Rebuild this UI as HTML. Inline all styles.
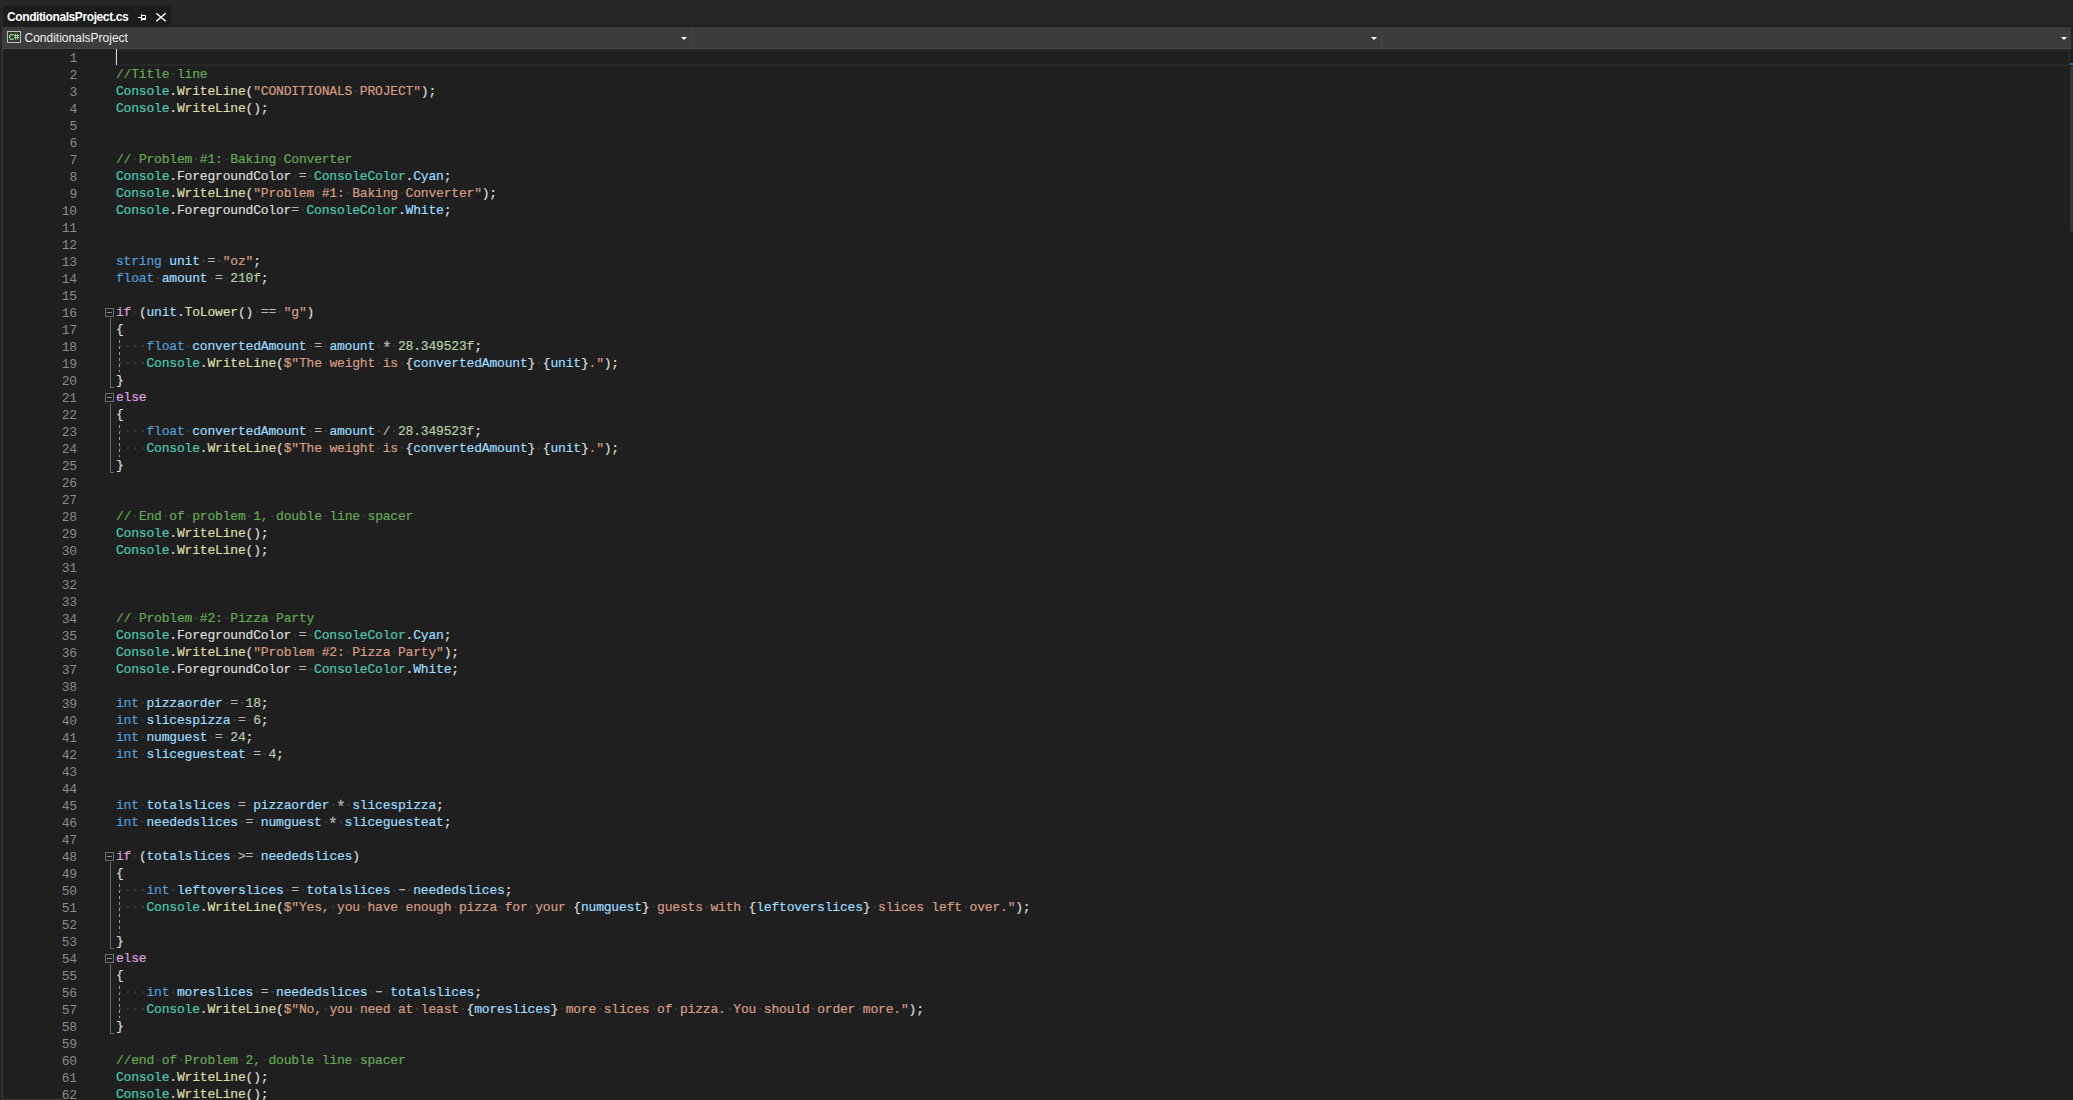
<!DOCTYPE html><html><head><meta charset="utf-8"><style>
*{margin:0;padding:0;box-sizing:border-box}
html,body{width:2073px;height:1100px;overflow:hidden;background:#262626}
body{position:relative;font-family:"Liberation Sans",sans-serif}
.tab{position:absolute;left:3px;top:6px;width:168px;height:19px;background:#1c1c1c}
.tabline{position:absolute;left:3px;top:25px;width:2073px;height:2px;background:#1e1e1e}
.tabtext{position:absolute;left:7px;top:10px;font:bold 12px "Liberation Sans",sans-serif;color:#fff;white-space:nowrap;letter-spacing:-0.4px}
.nav{position:absolute;left:2px;top:27px;width:2069px;height:21px;background:#3c3c3c}
.navline{position:absolute;left:2px;top:48px;width:2069px;height:1px;background:#484848}
.navtext{position:absolute;left:24.5px;top:31px;font:12px "Liberation Sans",sans-serif;color:#f0f0f0;white-space:nowrap}
.div{position:absolute;top:27px;width:3px;height:21px;background:#404040}
.arrow{position:absolute;width:0;height:0;border-left:3px solid transparent;border-right:3px solid transparent;border-top:3px solid #fff}
.editor{position:absolute;left:2px;top:49px;width:2068px;height:1051px;background:#1f1f1f;border-left:1px solid #3a3a3a}
.curline{position:absolute;left:114px;top:49px;width:1956px;height:17px;border:2px solid #282828}
.caret{position:absolute;left:116px;top:49px;width:1px;height:16px;background:#dcdcdc}
.ln{position:absolute;left:40px;width:37px;height:17px;text-align:right;font:13px "Liberation Mono",monospace;letter-spacing:-0.183px;line-height:17px;padding-top:1px;color:#8a8a8a}
.cl{position:absolute;left:116px;height:17px;white-space:pre;font:13px "Liberation Mono",monospace;letter-spacing:-0.183px;line-height:17px;padding-top:0px;color:#dcdcdc}
.cl b{font-weight:normal;-webkit-text-stroke:0.2px currentColor}
.cl i{font-style:normal;color:#3f3f3f}
.gs,.gm,.ge{display:inline-block}.gs{transform:translateY(2.2px) scale(1.25)}.gm{transform:translateY(-1px) scaleX(1.6)}.ge{transform:translateY(-1px)}
.kw{color:#569CD6}.ctl{color:#D8A0DF}.cls{color:#4EC9B0}.meth{color:#DCDCAA}.str{color:#D69D85}
.com{color:#66A858}.num{color:#B5CEA8}.var{color:#9CDCFE}.prop{color:#DCDCDC}.punc{color:#DCDCDC}.op{color:#B4B4B4}.brace{color:#DCDCDC}
.obox{position:absolute;left:105px;width:9px;height:9px;border:1px solid #6e6e6e}
.ominus{position:absolute;left:1px;top:3px;width:5px;height:1px;background:#8a8a8a}
.oline{position:absolute;left:110px;width:1px;background:#6a6a6a}
.otick{position:absolute;left:110px;width:4px;height:1px;background:#6a6a6a}
.ig{position:absolute;left:119px;width:1px;background:repeating-linear-gradient(to bottom,#9a9a9a 0,#9a9a9a 3px,transparent 3px,transparent 6px)}
.sb{position:absolute;left:2070px;top:49px;width:3px;height:1051px;background:#1f1f1f}
.thumb{position:absolute;left:2070px;top:66px;width:3px;height:166px;background:#353535;border-radius:0 0 2px 2px}
.sbmark{position:absolute;left:2070px;top:63px;width:3px;height:2px;background:#35629c}
</style></head><body><div class="tabline"></div><div class="tab"></div><div class="tabtext">ConditionalsProject.cs</div><svg style="position:absolute;left:136px;top:12px" width="12" height="11" viewBox="0 0 12 11"><path d="M2 5.5h3.5M5.5 2v7M5.5 3.5h4v4.5" fill="none" stroke="#fff" stroke-width="1"/><rect x="6" y="6" width="4" height="2" fill="#fff"/></svg><svg style="position:absolute;left:155px;top:12px" width="12" height="10" viewBox="0 0 12 10"><path d="M1.3 1.3L10.7 9.2M10.7 1.3L1.3 9.2" fill="none" stroke="#fff" stroke-width="1.5"/></svg><div class="nav"></div><div class="navline"></div><svg style="position:absolute;left:7px;top:31px" width="14" height="12" viewBox="0 0 14 12"><rect x="0.5" y="0.5" width="13" height="11" fill="#383838" stroke="#bdbdbd" stroke-width="1"/><path d="M6.6 3.6h-2.1a2 2.4 0 0 0 -2 2.4a2 2.4 0 0 0 2 2.4h2.1" fill="none" stroke="#8fe08f" stroke-width="1.1"/><path d="M8.5 3v5.5M10.5 3v5.5M7 4.5h5M7 6.5h5" fill="none" stroke="#8fe08f" stroke-width="1"/></svg><div class="navtext">ConditionalsProject</div><div class="div" style="left:690px"></div><div class="div" style="left:1380px"></div><div class="arrow" style="left:681px;top:37px"></div><div class="arrow" style="left:1371px;top:37px"></div><div class="arrow" style="left:2061px;top:37px"></div><div class="editor"></div><div class="curline"></div><div class="sb"></div><div class="thumb"></div><div class="sbmark"></div><div class="obox" style="top:308px"><div class="ominus"></div></div><div class="oline" style="top:318px;height:70px"></div><div class="otick" style="top:387px"></div><div class="obox" style="top:393px"><div class="ominus"></div></div><div class="oline" style="top:403px;height:70px"></div><div class="otick" style="top:472px"></div><div class="obox" style="top:852px"><div class="ominus"></div></div><div class="oline" style="top:862px;height:87px"></div><div class="otick" style="top:948px"></div><div class="obox" style="top:954px"><div class="ominus"></div></div><div class="oline" style="top:964px;height:70px"></div><div class="otick" style="top:1033px"></div><div class="ig" style="top:340px;height:32px"></div><div class="ig" style="top:425px;height:32px"></div><div class="ig" style="top:884px;height:49px"></div><div class="ig" style="top:986px;height:32px"></div><div class="ln" style="top:49px">1</div><div class="ln" style="top:66px">2</div><div class="cl" style="top:66px"><b class="com">//Title</b><i>·</i><b class="com">line</b></div><div class="ln" style="top:83px">3</div><div class="cl" style="top:83px"><b class="cls">Console</b><b class="punc">.</b><b class="meth">WriteLine</b><b class="punc">(</b><b class="str">&quot;CONDITIONALS</b><i>·</i><b class="str">PROJECT&quot;</b><b class="punc">);</b></div><div class="ln" style="top:100px">4</div><div class="cl" style="top:100px"><b class="cls">Console</b><b class="punc">.</b><b class="meth">WriteLine</b><b class="punc">();</b></div><div class="ln" style="top:117px">5</div><div class="ln" style="top:134px">6</div><div class="ln" style="top:151px">7</div><div class="cl" style="top:151px"><b class="com">//</b><i>·</i><b class="com">Problem</b><i>·</i><b class="com">#1:</b><i>·</i><b class="com">Baking</b><i>·</i><b class="com">Converter</b></div><div class="ln" style="top:168px">8</div><div class="cl" style="top:168px"><b class="cls">Console</b><b class="punc">.</b><b class="prop">ForegroundColor</b><i>·</i><b class="op ge">=</b><i>·</i><b class="cls">ConsoleColor</b><b class="punc">.</b><b class="var">Cyan</b><b class="punc">;</b></div><div class="ln" style="top:185px">9</div><div class="cl" style="top:185px"><b class="cls">Console</b><b class="punc">.</b><b class="meth">WriteLine</b><b class="punc">(</b><b class="str">&quot;Problem</b><i>·</i><b class="str">#1:</b><i>·</i><b class="str">Baking</b><i>·</i><b class="str">Converter&quot;</b><b class="punc">);</b></div><div class="ln" style="top:202px">10</div><div class="cl" style="top:202px"><b class="cls">Console</b><b class="punc">.</b><b class="prop">ForegroundColor</b><b class="op ge">=</b><i>·</i><b class="cls">ConsoleColor</b><b class="punc">.</b><b class="var">White</b><b class="punc">;</b></div><div class="ln" style="top:219px">11</div><div class="ln" style="top:236px">12</div><div class="ln" style="top:253px">13</div><div class="cl" style="top:253px"><b class="kw">string</b><i>·</i><b class="var">unit</b><i>·</i><b class="op ge">=</b><i>·</i><b class="str">&quot;oz&quot;</b><b class="punc">;</b></div><div class="ln" style="top:270px">14</div><div class="cl" style="top:270px"><b class="kw">float</b><i>·</i><b class="var">amount</b><i>·</i><b class="op ge">=</b><i>·</i><b class="num">210f</b><b class="punc">;</b></div><div class="ln" style="top:287px">15</div><div class="ln" style="top:304px">16</div><div class="cl" style="top:304px"><b class="ctl">if</b><i>·</i><b class="punc">(</b><b class="var">unit</b><b class="punc">.</b><b class="meth">ToLower</b><b class="punc">()</b><i>·</i><b class="op ge">=</b><b class="op ge">=</b><i>·</i><b class="str">&quot;g&quot;</b><b class="punc">)</b></div><div class="ln" style="top:321px">17</div><div class="cl" style="top:321px"><b class="punc">{</b></div><div class="ln" style="top:338px">18</div><div class="cl" style="top:338px"><i>·</i><i>·</i><i>·</i><i>·</i><b class="kw">float</b><i>·</i><b class="var">convertedAmount</b><i>·</i><b class="op ge">=</b><i>·</i><b class="var">amount</b><i>·</i><b class="op gs">*</b><i>·</i><b class="num">28.349523f</b><b class="punc">;</b></div><div class="ln" style="top:355px">19</div><div class="cl" style="top:355px"><i>·</i><i>·</i><i>·</i><i>·</i><b class="cls">Console</b><b class="punc">.</b><b class="meth">WriteLine</b><b class="punc">(</b><b class="str">$&quot;</b><b class="str">The</b><i>·</i><b class="str">weight</b><i>·</i><b class="str">is</b><i>·</i><b class="brace">{</b><b class="var">convertedAmount</b><b class="brace">}</b><i>·</i><b class="brace">{</b><b class="var">unit</b><b class="brace">}</b><b class="str">.</b><b class="str">&quot;</b><b class="punc">);</b></div><div class="ln" style="top:372px">20</div><div class="cl" style="top:372px"><b class="punc">}</b></div><div class="ln" style="top:389px">21</div><div class="cl" style="top:389px"><b class="ctl">else</b></div><div class="ln" style="top:406px">22</div><div class="cl" style="top:406px"><b class="punc">{</b></div><div class="ln" style="top:423px">23</div><div class="cl" style="top:423px"><i>·</i><i>·</i><i>·</i><i>·</i><b class="kw">float</b><i>·</i><b class="var">convertedAmount</b><i>·</i><b class="op ge">=</b><i>·</i><b class="var">amount</b><i>·</i><b class="op">/</b><i>·</i><b class="num">28.349523f</b><b class="punc">;</b></div><div class="ln" style="top:440px">24</div><div class="cl" style="top:440px"><i>·</i><i>·</i><i>·</i><i>·</i><b class="cls">Console</b><b class="punc">.</b><b class="meth">WriteLine</b><b class="punc">(</b><b class="str">$&quot;</b><b class="str">The</b><i>·</i><b class="str">weight</b><i>·</i><b class="str">is</b><i>·</i><b class="brace">{</b><b class="var">convertedAmount</b><b class="brace">}</b><i>·</i><b class="brace">{</b><b class="var">unit</b><b class="brace">}</b><b class="str">.</b><b class="str">&quot;</b><b class="punc">);</b></div><div class="ln" style="top:457px">25</div><div class="cl" style="top:457px"><b class="punc">}</b></div><div class="ln" style="top:474px">26</div><div class="ln" style="top:491px">27</div><div class="ln" style="top:508px">28</div><div class="cl" style="top:508px"><b class="com">//</b><i>·</i><b class="com">End</b><i>·</i><b class="com">of</b><i>·</i><b class="com">problem</b><i>·</i><b class="com">1,</b><i>·</i><b class="com">double</b><i>·</i><b class="com">line</b><i>·</i><b class="com">spacer</b></div><div class="ln" style="top:525px">29</div><div class="cl" style="top:525px"><b class="cls">Console</b><b class="punc">.</b><b class="meth">WriteLine</b><b class="punc">();</b></div><div class="ln" style="top:542px">30</div><div class="cl" style="top:542px"><b class="cls">Console</b><b class="punc">.</b><b class="meth">WriteLine</b><b class="punc">();</b></div><div class="ln" style="top:559px">31</div><div class="ln" style="top:576px">32</div><div class="ln" style="top:593px">33</div><div class="ln" style="top:610px">34</div><div class="cl" style="top:610px"><b class="com">//</b><i>·</i><b class="com">Problem</b><i>·</i><b class="com">#2:</b><i>·</i><b class="com">Pizza</b><i>·</i><b class="com">Party</b></div><div class="ln" style="top:627px">35</div><div class="cl" style="top:627px"><b class="cls">Console</b><b class="punc">.</b><b class="prop">ForegroundColor</b><i>·</i><b class="op ge">=</b><i>·</i><b class="cls">ConsoleColor</b><b class="punc">.</b><b class="var">Cyan</b><b class="punc">;</b></div><div class="ln" style="top:644px">36</div><div class="cl" style="top:644px"><b class="cls">Console</b><b class="punc">.</b><b class="meth">WriteLine</b><b class="punc">(</b><b class="str">&quot;Problem</b><i>·</i><b class="str">#2:</b><i>·</i><b class="str">Pizza</b><i>·</i><b class="str">Party&quot;</b><b class="punc">);</b></div><div class="ln" style="top:661px">37</div><div class="cl" style="top:661px"><b class="cls">Console</b><b class="punc">.</b><b class="prop">ForegroundColor</b><i>·</i><b class="op ge">=</b><i>·</i><b class="cls">ConsoleColor</b><b class="punc">.</b><b class="var">White</b><b class="punc">;</b></div><div class="ln" style="top:678px">38</div><div class="ln" style="top:695px">39</div><div class="cl" style="top:695px"><b class="kw">int</b><i>·</i><b class="var">pizzaorder</b><i>·</i><b class="op ge">=</b><i>·</i><b class="num">18</b><b class="punc">;</b></div><div class="ln" style="top:712px">40</div><div class="cl" style="top:712px"><b class="kw">int</b><i>·</i><b class="var">slicespizza</b><i>·</i><b class="op ge">=</b><i>·</i><b class="num">6</b><b class="punc">;</b></div><div class="ln" style="top:729px">41</div><div class="cl" style="top:729px"><b class="kw">int</b><i>·</i><b class="var">numguest</b><i>·</i><b class="op ge">=</b><i>·</i><b class="num">24</b><b class="punc">;</b></div><div class="ln" style="top:746px">42</div><div class="cl" style="top:746px"><b class="kw">int</b><i>·</i><b class="var">sliceguesteat</b><i>·</i><b class="op ge">=</b><i>·</i><b class="num">4</b><b class="punc">;</b></div><div class="ln" style="top:763px">43</div><div class="ln" style="top:780px">44</div><div class="ln" style="top:797px">45</div><div class="cl" style="top:797px"><b class="kw">int</b><i>·</i><b class="var">totalslices</b><i>·</i><b class="op ge">=</b><i>·</i><b class="var">pizzaorder</b><i>·</i><b class="op gs">*</b><i>·</i><b class="var">slicespizza</b><b class="punc">;</b></div><div class="ln" style="top:814px">46</div><div class="cl" style="top:814px"><b class="kw">int</b><i>·</i><b class="var">neededslices</b><i>·</i><b class="op ge">=</b><i>·</i><b class="var">numguest</b><i>·</i><b class="op gs">*</b><i>·</i><b class="var">sliceguesteat</b><b class="punc">;</b></div><div class="ln" style="top:831px">47</div><div class="ln" style="top:848px">48</div><div class="cl" style="top:848px"><b class="ctl">if</b><i>·</i><b class="punc">(</b><b class="var">totalslices</b><i>·</i><b class="op">&gt;</b><b class="op ge">=</b><i>·</i><b class="var">neededslices</b><b class="punc">)</b></div><div class="ln" style="top:865px">49</div><div class="cl" style="top:865px"><b class="punc">{</b></div><div class="ln" style="top:882px">50</div><div class="cl" style="top:882px"><i>·</i><i>·</i><i>·</i><i>·</i><b class="kw">int</b><i>·</i><b class="var">leftoverslices</b><i>·</i><b class="op ge">=</b><i>·</i><b class="var">totalslices</b><i>·</i><b class="op gm">-</b><i>·</i><b class="var">neededslices</b><b class="punc">;</b></div><div class="ln" style="top:899px">51</div><div class="cl" style="top:899px"><i>·</i><i>·</i><i>·</i><i>·</i><b class="cls">Console</b><b class="punc">.</b><b class="meth">WriteLine</b><b class="punc">(</b><b class="str">$&quot;</b><b class="str">Yes,</b><i>·</i><b class="str">you</b><i>·</i><b class="str">have</b><i>·</i><b class="str">enough</b><i>·</i><b class="str">pizza</b><i>·</i><b class="str">for</b><i>·</i><b class="str">your</b><i>·</i><b class="brace">{</b><b class="var">numguest</b><b class="brace">}</b><i>·</i><b class="str">guests</b><i>·</i><b class="str">with</b><i>·</i><b class="brace">{</b><b class="var">leftoverslices</b><b class="brace">}</b><i>·</i><b class="str">slices</b><i>·</i><b class="str">left</b><i>·</i><b class="str">over.</b><b class="str">&quot;</b><b class="punc">);</b></div><div class="ln" style="top:916px">52</div><div class="ln" style="top:933px">53</div><div class="cl" style="top:933px"><b class="punc">}</b></div><div class="ln" style="top:950px">54</div><div class="cl" style="top:950px"><b class="ctl">else</b></div><div class="ln" style="top:967px">55</div><div class="cl" style="top:967px"><b class="punc">{</b></div><div class="ln" style="top:984px">56</div><div class="cl" style="top:984px"><i>·</i><i>·</i><i>·</i><i>·</i><b class="kw">int</b><i>·</i><b class="var">moreslices</b><i>·</i><b class="op ge">=</b><i>·</i><b class="var">neededslices</b><i>·</i><b class="op gm">-</b><i>·</i><b class="var">totalslices</b><b class="punc">;</b></div><div class="ln" style="top:1001px">57</div><div class="cl" style="top:1001px"><i>·</i><i>·</i><i>·</i><i>·</i><b class="cls">Console</b><b class="punc">.</b><b class="meth">WriteLine</b><b class="punc">(</b><b class="str">$&quot;</b><b class="str">No,</b><i>·</i><b class="str">you</b><i>·</i><b class="str">need</b><i>·</i><b class="str">at</b><i>·</i><b class="str">least</b><i>·</i><b class="brace">{</b><b class="var">moreslices</b><b class="brace">}</b><i>·</i><b class="str">more</b><i>·</i><b class="str">slices</b><i>·</i><b class="str">of</b><i>·</i><b class="str">pizza.</b><i>·</i><b class="str">You</b><i>·</i><b class="str">should</b><i>·</i><b class="str">order</b><i>·</i><b class="str">more.</b><b class="str">&quot;</b><b class="punc">);</b></div><div class="ln" style="top:1018px">58</div><div class="cl" style="top:1018px"><b class="punc">}</b></div><div class="ln" style="top:1035px">59</div><div class="ln" style="top:1052px">60</div><div class="cl" style="top:1052px"><b class="com">//end</b><i>·</i><b class="com">of</b><i>·</i><b class="com">Problem</b><i>·</i><b class="com">2,</b><i>·</i><b class="com">double</b><i>·</i><b class="com">line</b><i>·</i><b class="com">spacer</b></div><div class="ln" style="top:1069px">61</div><div class="cl" style="top:1069px"><b class="cls">Console</b><b class="punc">.</b><b class="meth">WriteLine</b><b class="punc">();</b></div><div class="ln" style="top:1086px">62</div><div class="cl" style="top:1086px"><b class="cls">Console</b><b class="punc">.</b><b class="meth">WriteLine</b><b class="punc">();</b></div><div class="caret"></div><div style="position:absolute;left:2px;top:1099px;width:61px;height:1px;background:#3a3a3a"></div></body></html>
